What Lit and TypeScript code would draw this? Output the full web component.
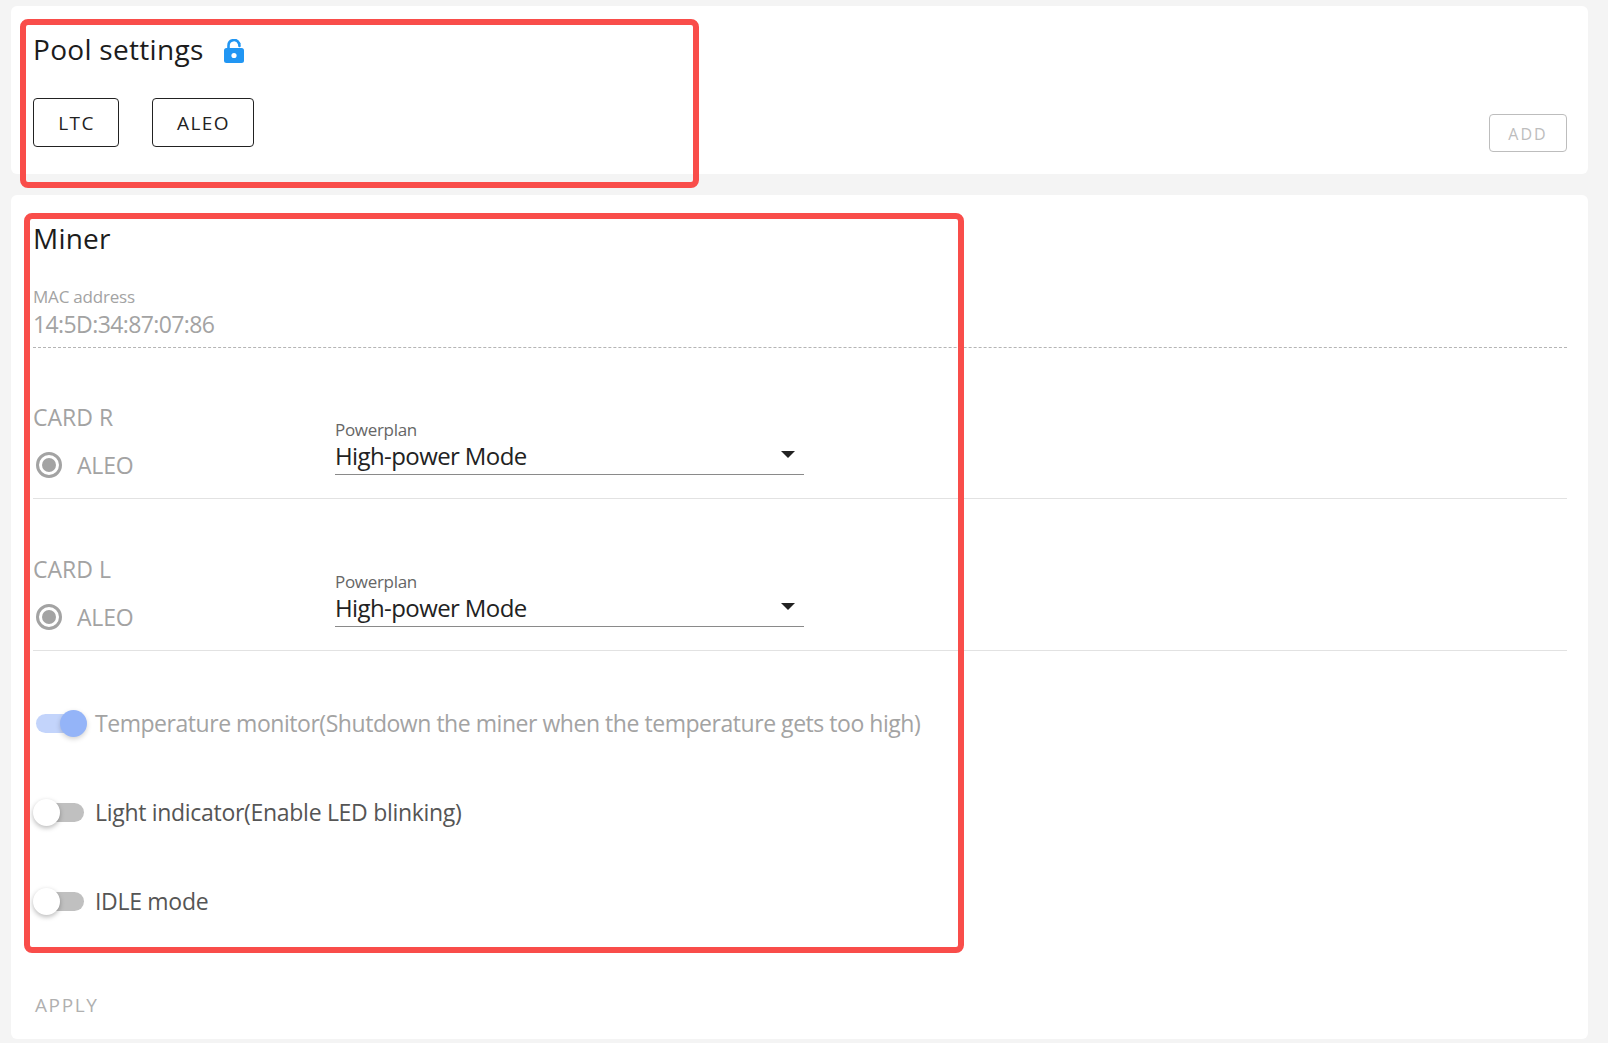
import { LitElement, html, css } from "lit";
import { customElement } from "lit/decorators.js";

@customElement("app-root")
export class AppRoot extends LitElement {
  static styles = css`
    :host { display: block; position: relative; width: 1608px; height: 1043px; overflow: hidden; background: #f4f4f4; font-family: "Open Sans", "Noto Sans", sans-serif; color: #222; }
    .page { display: flex; flex-direction: column; gap: 21px; padding: 6px 20px 0 11px; }
    .card { background: #fff; border-radius: 6px; padding: 0 21px 0 22px; }
    .pool { height: 168px; box-sizing: border-box; padding-top: 23px; padding-bottom: 22px; display: flex; justify-content: space-between; align-items: flex-end; }
    .pool-left { align-self: flex-start; }
    .title { font-size: 28px; line-height: 40px; display: flex; align-items: center; color: #1c1c1c; letter-spacing: 0.2px; }
    .title.pool-title { letter-spacing: 0.3px; }
    .title svg { margin-left: 20px; margin-top: 4px; }
    .chips { display: flex; gap: 33px; margin-top: 29px; }
    .chip { height: 49px; box-sizing: border-box; border: 1px solid #222; border-radius: 4px; display: flex; align-items: center; justify-content: center; font-size: 19px; letter-spacing: 1.4px; color: #222; background: #fff; padding-left: 1px; }
    .chip.ltc { width: 86px; }
    .chip.aleo { width: 102px; }
    .add { width: 78px; height: 38px; box-sizing: border-box; border: 1px solid #bdbdbd; border-radius: 4px; display: flex; align-items: center; justify-content: center; font-size: 16px; letter-spacing: 2.1px; color: #bdbdbd; padding-top: 2px; }
    .miner { height: 844px; box-sizing: border-box; padding-top: 23px; }
    .mac { padding-bottom: 8px; border-bottom: 1px dashed #b5b5b5; margin: 28px 0 -1px 0; }
    .mac-label { font-size: 17px; line-height: 22px; color: #a3a3a3; letter-spacing: -0.2px; }
    .mac-value { font-size: 23px; line-height: 30px; margin-top: 1px; color: #a3a3a3; letter-spacing: -0.6px; }
    .slot { height: 152px; box-sizing: border-box; border-bottom: 1px solid #e2e2e2; display: flex; }
    .slot-left { width: 302px; padding-top: 55px; color: #a3a3a3; }
    .slot-name { font-size: 23px; line-height: 30px; }
    .radio { display: flex; align-items: center; margin-top: 18px; height: 30px; font-size: 23px; gap: 15px; letter-spacing: -0.2px; }
    .radio svg { margin-left: 3px; }
    .select { width: 469px; align-self: flex-end; margin-bottom: 23px; border-bottom: 1px solid #8a8a8a; position: relative; }
    .select-label { font-size: 17px; line-height: 22px; color: #666; letter-spacing: -0.3px; }
    .select-value { font-size: 24px; line-height: 32px; padding-bottom: 2px; margin-top: -1px; color: #222; letter-spacing: -0.6px; }
    .select svg { position: absolute; right: 9px; top: 32px; }
    .toggles { padding-top: 28px; }
    .toggle-row { height: 89px; display: flex; align-items: center; font-size: 23px; color: #555; letter-spacing: -0.3px; }
    .toggle-row span { padding-bottom: 1px; }
    .toggle-row.off { color: #a3a3a3; letter-spacing: -0.46px; }
    .switch { width: 48px; height: 19px; margin: 0 11px 0 3px; border-radius: 10px; background: #c0c0c0; position: relative; flex: none; }
    .switch::after { content: ""; position: absolute; width: 27px; height: 27px; border-radius: 50%; top: -4px; left: -3px; background: #fff; box-shadow: 0 2px 5px rgba(0,0,0,.28); }
    .switch.on { background: #c3d4fb; }
    .switch.on::after { left: 24px; background: #94b4f8; box-shadow: 0 2px 5px rgba(0,0,0,.18); }
    .apply { margin-top: 44px; font-size: 19px; line-height: 30px; letter-spacing: 1.6px; color: #b0b0b0; padding-left: 2px; }
    .mark { position: absolute; box-sizing: border-box; border: 6px solid #f94d4a; border-radius: 8px; pointer-events: none; }
    .mark.one { left: 20px; top: 19px; width: 679px; height: 169px; }
    .mark.two { left: 24px; top: 213px; width: 940px; height: 740px; }
  `;

  private lock() {
    return html`<svg width="20" height="24" viewBox="0 0 20 24"><path d="M4.5 11V6.5a5.5 5.5 0 0 1 10.6-2" fill="none" stroke="#2196f3" stroke-width="2.6" stroke-linecap="round"/><path d="M15.1 4.5 15.5 7" fill="none" stroke="#2196f3" stroke-width="2.6" stroke-linecap="round"/><rect x="0" y="9" width="20" height="15" rx="2.5" fill="#2196f3"/><circle cx="10" cy="16.5" r="2.6" fill="#fff"/></svg>`;
  }

  private slot(name: string) {
    return html`<div class="slot">
      <div class="slot-left">
        <div class="slot-name">${name}</div>
        <div class="radio">
          <svg width="26" height="26" viewBox="0 0 26 26"><circle cx="13" cy="13" r="11.5" fill="none" stroke="#a3a3a3" stroke-width="3"/><circle cx="13" cy="13" r="7" fill="#a3a3a3"/></svg>
          <span>ALEO</span>
        </div>
      </div>
      <div class="select">
        <div class="select-label">Powerplan</div>
        <div class="select-value">High-power Mode</div>
        <svg width="14" height="7" viewBox="0 0 14 7"><path d="M0 0h14L7 7z" fill="#222"/></svg>
      </div>
    </div>`;
  }

  private toggle(label: string, on: boolean) {
    return html`<div class="toggle-row ${on ? "off" : ""}"><div class="switch ${on ? "on" : ""}"></div><span>${label}</span></div>`;
  }

  render() {
    return html`
      <div class="page">
        <section class="card pool">
          <div class="pool-left">
            <div class="title pool-title">Pool settings ${this.lock()}</div>
            <div class="chips"><div class="chip ltc">LTC</div><div class="chip aleo">ALEO</div></div>
          </div>
          <div class="add">ADD</div>
        </section>
        <section class="card miner">
          <div class="title">Miner</div>
          <div class="mac">
            <div class="mac-label">MAC address</div>
            <div class="mac-value">14:5D:34:87:07:86</div>
          </div>
          ${this.slot("CARD R")}
          ${this.slot("CARD L")}
          <div class="toggles">
            ${this.toggle("Temperature monitor(Shutdown the miner when the temperature gets too high)", true)}
            ${this.toggle("Light indicator(Enable LED blinking)", false)}
            ${this.toggle("IDLE mode", false)}
          </div>
          <div class="apply">APPLY</div>
        </section>
      </div>
      <div class="mark one"></div>
      <div class="mark two"></div>
    `;
  }
}
